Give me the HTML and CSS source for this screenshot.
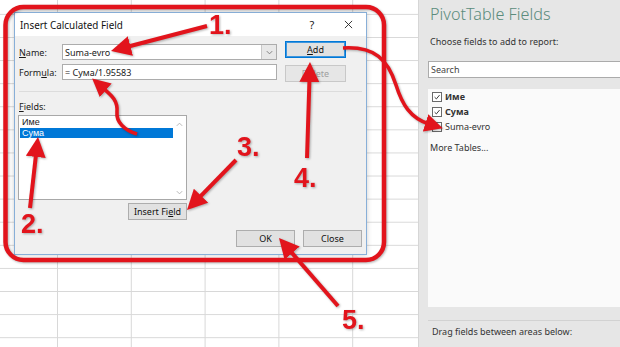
FILE: index.html
```html
<!DOCTYPE html>
<html>
<head>
<meta charset="utf-8">
<link rel="stylesheet" href="styles.css">
</head>
<body>
<div class="sheet"></div>
<div class="panel">
  <div class="pt-title">PivotTable Fields</div>
  <div class="pt-choose">Choose fields to add to report:</div>
  <div class="pt-search">Search</div>
  <div class="pt-list">
    <div class="pt-item bold"><span class="cb checked"><svg viewBox="0 0 10 10"><path d="M2 5.2 L4.2 7.4 L8.2 2.6"/></svg></span>Име</div>
    <div class="pt-item bold"><span class="cb checked"><svg viewBox="0 0 10 10"><path d="M2 5.2 L4.2 7.4 L8.2 2.6"/></svg></span>Сума</div>
    <div class="pt-item"><span class="cb"></span>Suma-evro</div>
    <div class="pt-more">More Tables...</div>
  </div>
  <div class="pt-bottom">Drag fields between areas below:</div>
</div>

<div class="dialog">
  <div class="titlebar">
    <span class="tb-title">Insert Calculated Field</span>
    <span class="tb-btn">?</span>
    <span class="tb-btn tb-close"><svg viewBox="0 0 10 10"><path d="M1 1 L9 9 M9 1 L1 9"/></svg></span>
  </div>
  <div class="dbody">
    <div class="top">
      <div class="form">
        <div class="row"><span class="lbl"><u>N</u>ame:</span>
          <div class="combo"><span class="combo-text">Suma-evro</span><span class="dd"><svg viewBox="0 0 10 10"><path d="M2 3.5 L5 6.5 L8 3.5"/></svg></span></div>
        </div>
        <div class="row"><span class="lbl">Form<u>u</u>la:</span>
          <div class="input">= Сума/1.95583</div>
        </div>
      </div>
      <div class="btns">
        <div class="btn focus"><u>A</u>dd</div>
        <div class="btn disabled">Delete</div>
      </div>
    </div>
    <div class="sep"></div>
    <div class="fields-lbl"><u>F</u>ields:</div>
    <div class="fields">
      <div class="listbox">
        <div class="items">
          <div class="it">Име</div>
          <div class="it sel">Сума</div>
        </div>
        <div class="sbar">
          <svg viewBox="0 0 10 10"><path d="M2 6.5 L5 3.5 L8 6.5"/></svg>
          <svg viewBox="0 0 10 10"><path d="M2 3.5 L5 6.5 L8 3.5"/></svg>
        </div>
      </div>
      <div class="ins-row"><div class="btn ins">Insert Fi<u>e</u>ld</div></div>
    </div>
    <div class="bottom-row">
      <div class="btn ok">OK</div>
      <div class="btn ok">Close</div>
    </div>
  </div>
</div>

<svg class="marks" viewBox="0 0 620 347" width="620" height="347">
  <defs>
    <marker id="ah" viewBox="0 0 10 10" refX="2" refY="5" markerWidth="5" markerHeight="5" orient="auto" markerUnits="strokeWidth">
      <path d="M0 0 L10 5 L0 10 z" fill="#e2141c"/>
    </marker>
  </defs>
  <rect x="5.5" y="7" width="378.5" height="253" rx="18" ry="18" class="frame"/>
  <line x1="207" y1="26" x2="126.5" y2="47" class="ar"/>
  <path d="M137 134 C124 130 116 122 117 112 C118 100 111 95 103 88" class="ar thin"/>
  <line x1="30" y1="208" x2="36.2" y2="152.9" class="ar"/>
  <line x1="236" y1="160" x2="198.2" y2="198.6" class="ar"/>
  <line x1="307" y1="158" x2="309.5" y2="78" class="ar"/>
  <path d="M343 48 C375 46 388 60 396 85 C402 104 410 118 429 124" class="ar thin"/>
  <line x1="338" y1="306" x2="289.5" y2="250.1" class="ar"/>
  <text x="209" y="34" class="num">1.</text>
  <text x="21" y="233" class="num">2.</text>
  <text x="237" y="156" class="num">3.</text>
  <text x="294" y="187" class="num">4.</text>
  <text x="342" y="329" class="num">5.</text>
</svg>
</body>
</html>
```
FILE: styles.css
```css
html, body {
  margin: 0;
  padding: 0;
}
body {
  width: 620px;
  height: 347px;
  overflow: hidden;
  position: relative;
  display: flex;
  font-family: "Noto Sans", "Open Sans", sans-serif;
  color: #1a1a1a;
  background: #fff;
}
.sheet {
  flex: 0 0 418px;
  height: 347px;
  background-color: #fff;
  background-image:
    linear-gradient(to right, #d8d8d8 1px, transparent 1px),
    linear-gradient(to bottom, #d8d8d8 1px, transparent 1px);
  background-size: 73.8px 23.1px;
  background-position: -16.8px 13.9px;
}
.panel {
  flex: 1;
  background: #e6e6e6;
  border-left: 1px solid #d6d6d6;
  padding-left: 9px;
  display: flex;
  flex-direction: column;
  min-width: 0;
}
.pt-title {
  margin: 4px 0 0 2px;
  font-size: 16.2px;
  line-height: 21px;
  color: #5b8c7c;
  font-weight: 300;
  white-space: nowrap;
}
.pt-choose {
  margin: 10px 0 0 2px;
  font-size: 9px;
  line-height: 13px;
  color: #333;
  white-space: nowrap;
}
.pt-search {
  margin-top: 13px;
  height: 17px;
  box-sizing: border-box;
  background: #fff;
  border: 1px solid #ababab;
  border-right: none;
  font-size: 9px;
  line-height: 15px;
  padding-left: 2px;
  color: #444;
}
.pt-list {
  margin-top: 11px;
  height: 218px;
  background: #fafafa;
}
.pt-item {
  height: 15px;
  display: flex;
  align-items: center;
  padding-left: 4px;
  font-size: 9px;
  color: #333;
}
.pt-item.bold {
  font-weight: bold;
}
.cb {
  width: 10px;
  height: 10px;
  box-sizing: border-box;
  border: 1px solid #6a6a6a;
  background: #fff;
  margin-right: 3px;
  display: inline-flex;
}
.cb svg {
  width: 8px;
  height: 8px;
  fill: none;
  stroke: #333;
  stroke-width: 1.2;
}
.pt-more {
  margin-top: 7px;
  padding-left: 2px;
  font-size: 9px;
  line-height: 14px;
  color: #333;
}
.pt-bottom {
  margin-top: 13px;
  border-top: 1px solid #d2d2d2;
  padding: 4px 0 0 4px;
  font-size: 9px;
  line-height: 13px;
  color: #333;
  white-space: nowrap;
}

/* dialog window */
.dialog {
  position: absolute;
  left: 14px;
  top: 12px;
  width: 353px;
  height: 243px;
  box-sizing: border-box;
  border: 1px solid #88afd8;
  background: #f0f0f0;
  box-shadow: 0 0 5px rgba(0, 0, 0, 0.2);
  display: flex;
  flex-direction: column;
  font-size: 9px;
}
.titlebar {
  height: 23px;
  flex: 0 0 23px;
  background: #fff;
  display: flex;
  align-items: center;
  padding-left: 5px;
}
.tb-title {
  flex: 1;
  font-size: 9.9px;
  color: #111;
}
.tb-btn {
  width: 36px;
  text-align: center;
  font-size: 11px;
  color: #222;
  display: flex;
  justify-content: center;
}
.tb-close svg {
  width: 9px;
  height: 9px;
  stroke: #222;
  stroke-width: 1;
}
.dbody {
  flex: 1;
  padding: 5px 4px 7px 4px;
  display: flex;
  flex-direction: column;
}
.top {
  display: flex;
  gap: 8px;
}
.form {
  width: 258px;
  margin-top: 3px;
  display: flex;
  flex-direction: column;
  gap: 4px;
}
.row {
  display: flex;
  align-items: center;
  height: 16px;
}
.lbl {
  width: 43px;
  flex: 0 0 43px;
}
.combo, .input {
  flex: 1;
  height: 16px;
  box-sizing: border-box;
  border: 1px solid #acacac;
  background: #fff;
  display: flex;
  align-items: center;
}
.combo-text, .input {
  padding-left: 2px;
}
.combo-text {
  flex: 1;
}
.dd {
  width: 14px;
  height: 14px;
  background: #e8e8e8;
  border-left: 1px solid #c8c8c8;
  display: flex;
  align-items: center;
  justify-content: center;
}
.dd svg, .sbar svg {
  width: 9px;
  height: 9px;
  fill: none;
  stroke: #777;
  stroke-width: 1;
}
.btns {
  display: flex;
  flex-direction: column;
  gap: 7px;
}
.btn {
  width: 61px;
  height: 17px;
  box-sizing: border-box;
  border: 1px solid #adadad;
  background: #e1e1e1;
  display: flex;
  align-items: center;
  justify-content: center;
  color: #111;
}
.btn.focus {
  border: 1px solid #0078d7;
  box-shadow: inset 0 0 0 1px #3d95dd;
}
.btn.disabled {
  color: #a0a0a0;
  border-color: #c8c8c8;
  background: #e6e6e6;
}
.sep {
  margin-top: 9px;
  border-top: 1px solid #dcdcdc;
}
.fields-lbl {
  margin-top: 9px;
  line-height: 12px;
}
.fields {
  width: 169px;
  margin-left: -1px;
  margin-top: 2px;
}
.listbox {
  height: 85px;
  box-sizing: border-box;
  border: 1px solid #a8a8a8;
  background: #fff;
  display: flex;
}
.items {
  flex: 1;
  padding: 1px 0 0 1px;
}
.it {
  height: 10.5px;
  line-height: 10.5px;
  padding-left: 2px;
  font-family: "Liberation Sans", Arial, sans-serif;
  font-size: 9px;
}
.it.sel {
  background: #0078d7;
  color: #fff;
}
.sbar {
  width: 13px;
  display: flex;
  flex-direction: column;
  justify-content: space-between;
  align-items: center;
  padding: 4px 0 2px;
}
.sbar svg {
  stroke: #b0b0b0;
}
.ins-row {
  margin-top: 3px;
  display: flex;
  justify-content: flex-end;
}
.btn.ins {
  width: 59px;
}
.bottom-row {
  margin-top: auto;
  display: flex;
  justify-content: flex-end;
  gap: 8px;
}
.btn.ok {
  width: 59px;
}

/* annotation overlay */
.marks {
  position: absolute;
  left: 0;
  top: 0;
  pointer-events: none;
  filter: drop-shadow(1px 1.5px 1px rgba(0, 0, 0, 0.3));
}
.frame {
  fill: none;
  stroke: #e2141c;
  stroke-width: 4.5;
}
.ar {
  fill: none;
  stroke: #e2141c;
  stroke-width: 4;
  marker-end: url(#ah);
}
.ar.thin {
  stroke-width: 3.6;
}
.num {
  font-family: "Liberation Sans", Arial, sans-serif;
  font-weight: bold;
  font-size: 27px;
  fill: #e2141c;
}
```
